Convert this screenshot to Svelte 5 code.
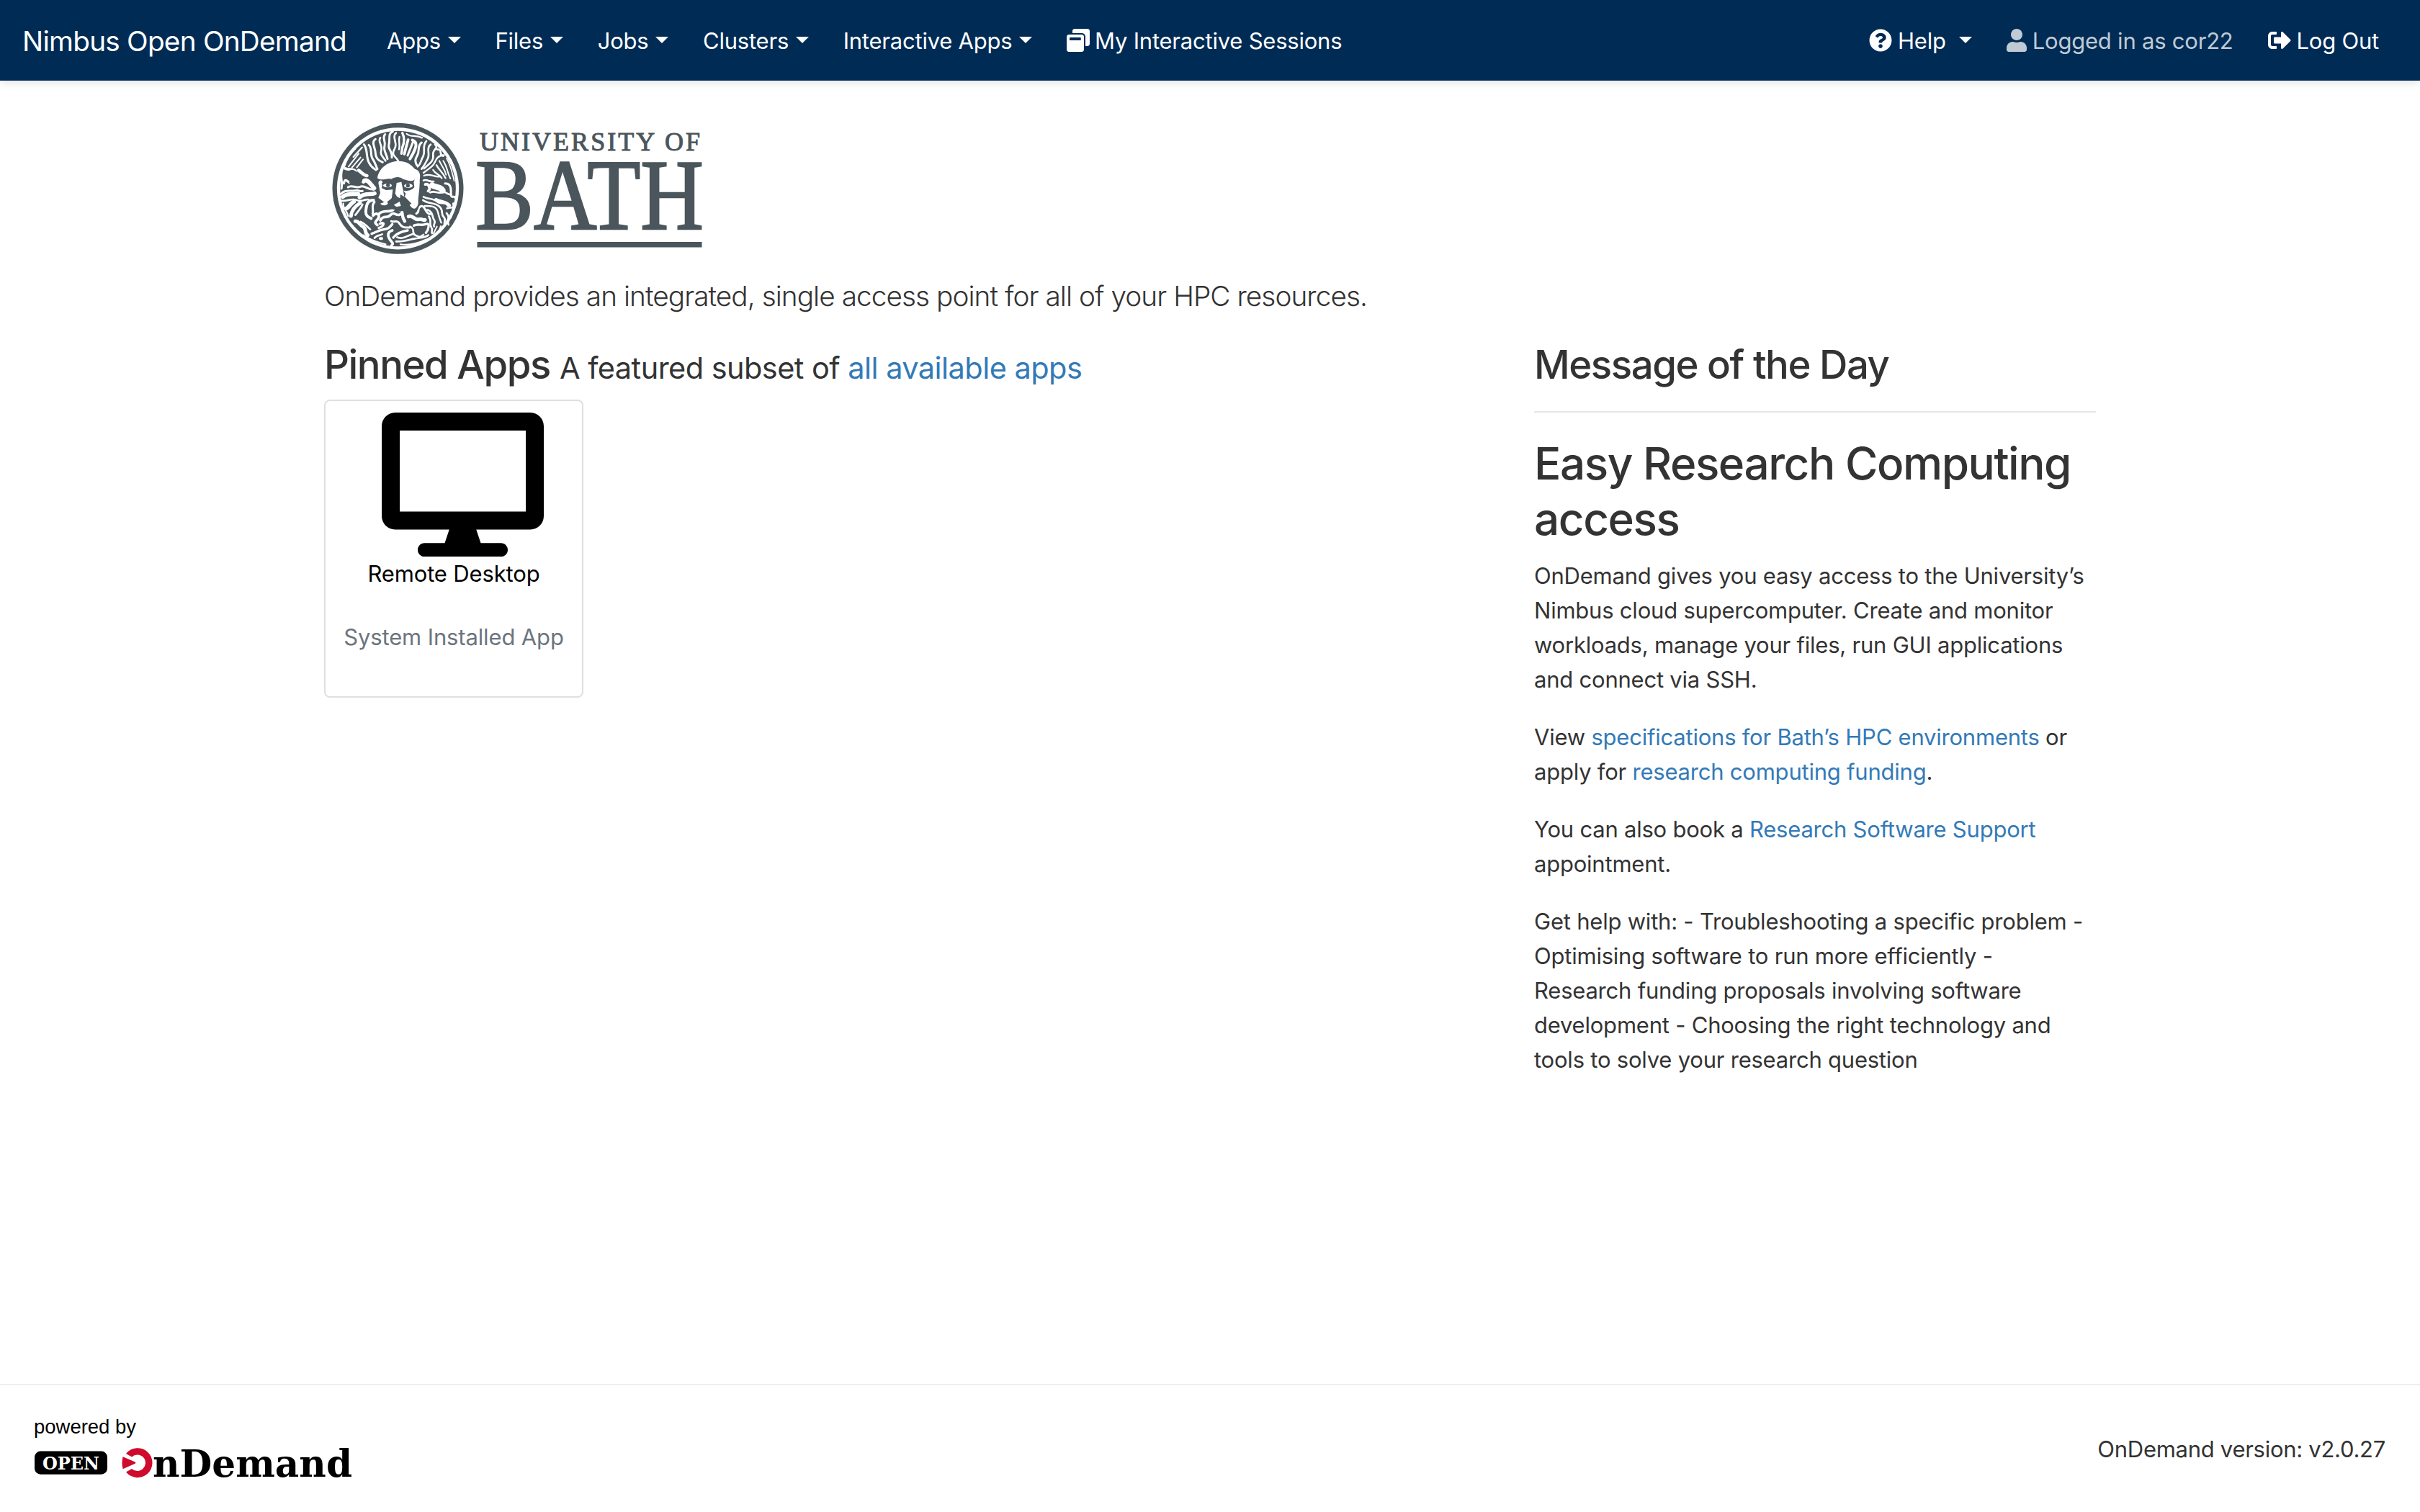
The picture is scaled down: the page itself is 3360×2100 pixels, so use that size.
<script>
  const icons = {
    sessions: {
      w: 512,
      d: 'M512 48v288c0 26.5-21.5 48-48 48h-48V176c0-44.1-35.9-80-80-80H128V48c0-26.5 21.5-48 48-48h288c26.5 0 48 21.5 48 48zM384 176v288c0 26.5-21.5 48-48 48H48c-26.5 0-48-21.5-48-48V176c0-26.5 21.5-48 48-48h288c26.5 0 48 21.5 48 48zm-68 28c0-6.6-5.4-12-12-12H76c-6.6 0-12 5.4-12 12v52h252v-52z'
    },
    help: {
      w: 512,
      d: 'M504 256c0 136.997-111.043 248-248 248S8 392.997 8 256C8 119.083 119.043 8 256 8s248 111.083 248 248zM262.655 90c-54.497 0-89.255 22.957-116.549 63.758-3.536 5.286-2.353 12.415 2.715 16.258l34.699 26.31c5.205 3.947 12.621 3.008 16.665-2.122 17.864-22.658 30.113-35.797 57.303-35.797 20.429 0 45.698 13.148 45.698 32.958 0 14.976-12.363 22.667-32.534 33.976C247.128 238.528 216 254.941 216 296v4c0 6.627 5.373 12 12 12h56c6.627 0 12-5.373 12-12v-1.333c0-28.462 83.186-29.647 83.186-106.667 0-58.002-60.165-102-116.531-102zM256 338c-25.365 0-46 20.635-46 46 0 25.364 20.635 46 46 46s46-20.636 46-46c0-25.365-20.635-46-46-46z'
    },
    user: {
      w: 448,
      d: 'M224 256c70.7 0 128-57.3 128-128S294.7 0 224 0 96 57.3 96 128s57.3 128 128 128zm89.6 32h-16.7c-22.2 10.2-46.9 16-72.9 16s-50.6-5.8-72.9-16h-16.7C60.2 288 0 348.2 0 422.4V464c0 26.5 21.5 48 48 48h352c26.5 0 48-21.5 48-48v-41.6c0-74.2-60.2-134.4-134.4-134.4z'
    },
    logout: {
      w: 512,
      d: 'M497 273L329 441c-15 15-41 4.5-41-17v-96H152c-13.3 0-24-10.7-24-24v-96c0-13.3 10.7-24 24-24h136V88c0-21.4 25.9-32 41-17l168 168c9.3 9.4 9.3 24.6 0 34zM192 436v-40c0-6.6-5.4-12-12-12H96c-17.7 0-32-14.3-32-32V160c0-17.7 14.3-32 32-32h84c6.6 0 12-5.4 12-12V76c0-6.6-5.4-12-12-12H96c-53 0-96 43-96 96v192c0 53 43 96 96 96h84c6.6 0 12-5.4 12-12z'
    }
  };

  const menus = ['Apps', 'Files', 'Jobs', 'Clusters', 'Interactive Apps'];

  // Strands of hair and beard on the crest: [stroke width, path]
  const strands = [
    [9, 'M268 50C246 58 258 84 252 104S268 132 264 158'],
    [8, 'M282 56C268 66 278 84 280 104S262 132 272 148 286 160 292 176'],
    [7, 'M296 72C290 88 300 104 294 124'],
    [9, 'M236 62C222 76 240 92 234 110S240 138 246 164'],
    [8, 'M216 76C204 92 226 106 220 128S228 154 238 172'],
    [9, 'M196 82C176 94 196 118 196 140S210 172 226 178'],
    [9, 'M168 106C184 118 172 146 184 164S196 190 204 206'],
    [9, 'M148 104C164 122 156 154 168 178S186 200 198 210'],
    [7, 'M140 116L104 156'],
    [6, 'M126 142L84 196'],
    [6, 'M134 158L98 200'],
    [6, 'M144 166L118 200'],
    [6, 'M112 122C88 142 74 170 66 198'],
    [10, 'M308 56C318 76 318 92 308 116L304 142'],
    [11, 'M332 84L316 144'],
    [9, 'M352 94L330 150'],
    [12, 'M350 86C374 96 364 118 352 142L340 164'],
    [7, 'M326 60C344 76 362 62 390 76'],
    [9, 'M388 96C368 112 382 130 370 150S362 176 368 190'],
    [8, 'M408 90C388 110 406 132 394 154S386 184 372 196'],
    [8, 'M426 104C406 118 424 142 414 162S404 186 388 206'],
    [8, 'M444 104C462 120 432 124 436 148S424 182 398 204'],
    [8, 'M452 124C480 126 456 146 478 152'],
    [7, 'M482 148C446 150 448 176 436 190S418 204 396 222'],
    [6, 'M462 172C472 196 484 204 490 230'],
    [6, 'M478 172C496 198 494 220 508 246'],
    [5, 'M492 162C510 190 516 224 524 256'],
    [7, 'M450 190C462 212 472 214 488 244'],
    [7, 'M436 210C446 228 460 226 472 244'],
    [7, 'M398 234C424 222 436 240 462 238'],
    [8, 'M396 254C410 246 420 262 438 258'],
    [12, 'M404 270C416 264 428 288 416 298'],
    [24, 'M432 274C446 286 464 276 476 296'],
    [9, 'M486 266C504 266 512 278 510 306S526 314 528 326'],
    [8, 'M424 304C440 294 454 310 474 304S494 316 512 312'],
    [8, 'M396 322C418 334 434 326 452 342S484 338 498 360'],
    [14, 'M448 334C466 344 486 340 504 358'],
    [8, 'M394 336C412 352 442 344 462 362S466 394 480 406 476 430 486 440'],
    [7, 'M402 360C428 360 450 360 456 386S464 414 470 430'],
    [8, 'M494 370C512 364 524 374 520 350'],
    [8, 'M492 390C510 408 492 422 500 438'],
    [6, 'M522 378L508 412'],
    [12, 'M70 204C84 212 98 202 112 214'],
    [9, 'M54 222C50 246 60 262 54 288'],
    [14, 'M126 212C142 224 148 232 160 234'],
    [18, 'M146 258C162 242 176 272 190 286'],
    [10, 'M64 266C68 244 78 256 86 262'],
    [9, 'M82 282C98 270 112 288 132 280S160 292 188 292'],
    [9, 'M52 310C70 290 88 300 110 296S128 302 142 298'],
    [17, 'M60 322C76 306 98 312 124 310'],
    [17, 'M130 324C150 304 174 314 192 308'],
    [8, 'M54 338C78 342 98 326 118 336S152 330 168 334'],
    [17, 'M76 370C88 362 94 348 106 342'],
    [15, 'M94 402C96 376 116 358 132 348'],
    [8, 'M112 398C124 382 138 366 142 354'],
    [7, 'M62 350C58 368 78 380 82 402'],
    [12, 'M188 336C160 336 158 360 156 380S164 406 178 412'],
    [9, 'M192 344C176 360 190 374 184 392'],
    [15, 'M112 424C126 422 128 438 144 446S148 472 164 482'],
    [8, 'M134 426C150 432 162 446 174 458'],
    [8, 'M98 440C108 454 120 462 128 478'],
    [11, 'M186 400C202 384 218 400 206 414S190 428 204 440'],
    [11, 'M212 392C230 374 248 390 270 376'],
    [11, 'M216 420C232 394 242 416 258 398S280 404 298 396'],
    [10, 'M214 434C238 424 232 444 210 452'],
    [9, 'M262 424C280 430 284 416 296 434S318 450 338 450'],
    [10, 'M180 476C202 468 208 462 230 458S252 452 266 436'],
    [8, 'M192 494C204 478 214 486 224 478'],
    [13, 'M296 374C316 386 300 400 318 424'],
    [15, 'M334 404C352 396 358 420 376 416S398 424 402 418'],
    [9, 'M366 392C384 380 366 372 384 362S404 396 424 394'],
    [8, 'M412 376C438 386 430 404 440 418S434 438 440 446'],
    [8, 'M418 404C432 422 418 434 428 448S426 466 432 474'],
    [10, 'M356 442C374 432 388 444 406 436S418 458 406 472'],
    [8, 'M340 446C364 456 344 474 362 482S382 492 396 480'],
    [11, 'M266 462C240 470 248 492 262 508S260 520 262 528'],
    [10, 'M270 492C284 472 308 466 330 462'],
    [8, 'M286 490C308 502 332 482 354 476'],
    [8, 'M282 508C316 510 338 500 360 496S400 494 416 482'],
    [7, 'M300 520C338 526 374 516 408 500'],
    [6, 'M452 446L438 474'],
    [6, 'M468 444L458 470'],
    [7, 'M146 482C176 502 204 512 238 520'],
    [12, 'M216 496L222 496']
  ];
</script>

{#snippet icon(i)}
  <svg class="icon" class:narrow={i.w === 448} viewBox="0 0 {i.w} 512" aria-hidden="true"><path d={i.d} /></svg>
{/snippet}

<div class="page">
  <nav class="navbar">
    <a class="brand" href="#home">Nimbus Open OnDemand</a>
    <div class="menu">
      {#each menus as m}
        <a class="item" href="#menu">{m}<span class="caret"></span></a>
      {/each}
      <a class="item sessions" href="#sessions">{@render icon(icons.sessions)}<span>My Interactive Sessions</span></a>
    </div>
    <div class="menu account">
      <a class="item help" href="#help">{@render icon(icons.help)}<span>Help</span><span class="caret"></span></a>
      <span class="item muted">{@render icon(icons.user)}<span>Logged in as cor22</span></span>
      <a class="item" href="#logout">{@render icon(icons.logout)}<span>Log Out</span></a>
    </div>
  </nav>

  <main>
    <svg class="logo" viewBox="0 0 540 192" role="img" aria-label="University of Bath">
      <g transform="translate(6 0) scale(.33333)">
        <circle class="ring" cx="289.5" cy="287.5" r="263.5" />
        <circle class="ink" cx="289.5" cy="288" r="241" />
        <g class="strands">
          {#each strands as [w, d]}
            <path stroke-width={w} {d} />
          {/each}
        </g>
        <path class="ink" d="M200 232C206 300 196 330 214 360C250 376 280 372 300 384C330 372 350 396 372 376C392 330 386 260 384 210L300 190Z" />
        <g class="white">
          <path d="M204 240C212 205 240 178 285 173C330 172 345 190 360 206C378 210 386 228 380 250L354 254C336 260 325 250 310 248C300 238 280 236 262 248C245 242 228 256 205 246Z" />
          <path d="M354 250L380 246C382 290 372 325 374 350C366 378 352 376 338 356L346 350L318 322L322 308L312 296C325 298 345 298 358 282Z" />
          <path d="M284 264L304 260L312 300L316 322L300 312L298 328L286 322L278 308Z" />
          <path d="M208 264C210 250 226 250 226 264L222 286L240 294L268 292L264 326C254 340 240 338 248 350C238 362 220 358 216 350L232 344L208 326L216 306Z" />
          <ellipse cx="246" cy="275" rx="18" ry="8" />
          <ellipse cx="333" cy="276" rx="18" ry="9" />
          <path d="M272 356L296 342L302 360L284 364Z" />
        </g>
        <g class="ink">
          <circle cx="248" cy="274" r="8" />
          <circle cx="331" cy="275" r="8" />
          <path d="M308 262C330 254 340 264 360 250L352 266C336 262 326 266 314 272Z" />
          <path d="M222 264C240 256 258 262 280 252L276 270C258 262 240 264 224 272Z" />
          <path d="M84 214C104 204 116 214 118 226C136 228 148 242 138 262L122 258L118 276L104 262L86 264L92 246Z" />
        </g>
      </g>
      <g class="words">
        <text class="small" x="216" y="43.3" textLength="306" lengthAdjust="spacing">UNIVERSITY OF</text>
        <text class="big" x="210" y="151.5" textLength="317" lengthAdjust="spacingAndGlyphs">BATH</text>
      </g>
      <rect class="ink" x="212.5" y="170" width="312" height="7.5" />
    </svg>

    <p class="lead">OnDemand provides an integrated, single access point for all of your HPC resources.</p>

    <div class="columns">
      <section>
        <h2>Pinned Apps <small>A featured subset of <a href="#apps">all available apps</a></small></h2>
        <a class="card" href="#desktop">
          <svg class="monitor" viewBox="0 0 576 512" aria-hidden="true"><path d="M528 0H48C21.5 0 0 21.5 0 48v320c0 26.5 21.5 48 48 48h192l-16 48h-72c-13.3 0-24 10.7-24 24s10.7 24 24 24h272c13.3 0 24-10.7 24-24s-10.7-24-24-24h-72l-16-48h192c26.5 0 48-21.5 48-48V48c0-26.5-21.5-48-48-48zm-16 352H64V64h448v288z" /></svg>
          <span class="title">Remote Desktop</span>
          <span class="kind">System Installed App</span>
        </a>
      </section>

      <aside>
        <h2>Message of the Day</h2>
        <hr />
        <h1>Easy Research Computing<br />access</h1>
        <p>OnDemand gives you easy access to the University’s<br />Nimbus cloud supercomputer. Create and monitor<br />workloads, manage your files, run GUI applications<br />and connect via SSH.</p>
        <p>View <a href="#spec">specifications for Bath’s HPC environments</a> or<br />apply for <a href="#funding">research computing funding</a>.</p>
        <p>You can also book a <a href="#support">Research Software Support</a><br />appointment.</p>
        <p>Get help with: - Troubleshooting a specific problem -<br />Optimising software to run more efficiently -<br />Research funding proposals involving software<br />development - Choosing the right technology and<br />tools to solve your research question</p>
      </aside>
    </div>
  </main>

  <footer>
    <svg class="powered" viewBox="0 0 444 90" role="img" aria-label="powered by Open OnDemand">
      <text class="by" x="-1" y="21.3" textLength="142" lengthAdjust="spacingAndGlyphs">powered by</text>
      <rect x="0" y="45.5" width="101" height="32.3" rx="8.5" />
      <text class="open" x="11" y="70.7" textLength="79" lengthAdjust="spacingAndGlyphs">OPEN</text>
      <path class="red" d="M127 48.9A20.5 20.5 0 1 1 127 74.5L135 70A11.3 11.3 0 1 0 135 53.4Z" />
      <path class="red" d="M122.6 53.3L139.6 60.6Q141 61.7 139.6 62.8L122.6 70.2Q120.4 61.7 122.6 53.3Z" />
      <text class="demand" x="164" y="81" textLength="277" lengthAdjust="spacingAndGlyphs">nDemand</text>
    </svg>
    <span class="version">OnDemand version: v2.0.27</span>
  </footer>
</div>

<style>
  :global(body) {
    background: #fff;
  }
  .page {
    height: 2100px;
    display: flex;
    flex-direction: column;
    box-sizing: border-box;
    overflow: hidden;
    color: #333;
    font: 400 31px/48px Inter, 'Liberation Sans', sans-serif;
    letter-spacing: -0.22px;
  }
  a {
    color: #337ab7;
    text-decoration: none;
  }
  h1,
  h2,
  p {
    margin: 0;
  }
  .navbar {
    height: 112px;
    flex: none;
    box-sizing: border-box;
    padding: 1px 57px 0 31px;
    display: flex;
    align-items: center;
    background: #002b55;
    box-shadow: 0 2px 12px rgba(0, 0, 0, 0.13);
    white-space: nowrap;
  }
  .brand {
    width: 506px;
    font-size: 38.75px;
    letter-spacing: -0.78px;
    color: #fff;
  }
  .menu {
    display: flex;
    align-items: center;
    gap: 47.6px;
  }
  .account {
    margin-left: auto;
    gap: 48px;
  }
  .item {
    display: flex;
    align-items: center;
    color: #fff;
  }
  .muted {
    color: #bfcad5;
  }
  .caret {
    margin: -3px 0 0 10px;
    border: 9.6px solid transparent;
    border-top-color: #fff;
    border-bottom: 0;
  }
  .help .caret {
    margin-left: 18px;
  }
  .icon {
    width: 32px;
    height: 32px;
    margin-right: 7px;
    margin-top: -1px;
    fill: currentColor;
  }
  .account .icon {
    margin-right: 8px;
  }
  .icon.narrow {
    width: 28px;
  }
  main {
    flex: 1;
    width: 2460px;
    margin: 0 auto;
    padding-top: 54px;
  }
  .logo {
    display: block;
    width: 540px;
    height: 192px;
    overflow: visible;
  }
  .ring {
    fill: none;
    stroke: #4b565c;
    stroke-width: 19;
  }
  .ink {
    fill: #4b565c;
  }
  .strands {
    fill: none;
    stroke: #fff;
    stroke-linecap: round;
  }
  .white {
    fill: #fff;
  }
  .words {
    fill: #4b565c;
    stroke: #4b565c;
    font-family: 'Liberation Serif', serif;
    letter-spacing: 0;
  }
  .small {
    font-size: 36px;
    stroke-width: 1;
  }
  .big {
    font-size: 139px;
    stroke-width: 2.4;
  }
  .lead {
    margin: 23px 0 32px;
    font-size: 38.75px;
    font-weight: 300;
    line-height: 60px;
    letter-spacing: -0.94px;
  }
  .columns {
    display: grid;
    grid-template-columns: 1620px 780px;
    gap: 60px;
    white-space: nowrap;
  }
  h2 {
    font-size: 54.5px;
    font-weight: 500;
    line-height: 67px;
    letter-spacing: -1.45px;
  }
  h2 small {
    font-size: 41.5px;
    font-weight: 400;
    line-height: 1;
    letter-spacing: -0.55px;
  }
  .card {
    width: 360px;
    height: 414px;
    box-sizing: border-box;
    margin-top: 15px;
    padding-top: 16px;
    display: flex;
    flex-direction: column;
    align-items: center;
    border: 2px solid #dfdfdf;
    border-radius: 8px;
    color: #000;
    letter-spacing: -0.14px;
  }
  .monitor {
    width: 225px;
    height: 200px;
    margin-left: 24px;
  }
  .kind {
    margin-top: 40px;
    color: #6c757d;
  }
  hr {
    margin: 31px 0 33px;
    border: 0;
    height: 2px;
    background: #e5e5e5;
  }
  h1 {
    margin-bottom: 16px;
    font-size: 62px;
    font-weight: 500;
    line-height: 76.8px;
    letter-spacing: -1.43px;
  }
  aside p {
    margin-bottom: 32px;
  }
  footer {
    flex: none;
    height: 178px;
    box-sizing: border-box;
    padding: 0 48px 0 48px;
    border-top: 2px solid #eee;
    display: flex;
    align-items: center;
    justify-content: space-between;
  }
  .powered {
    width: 444px;
    height: 90px;
    margin-top: 6px;
    overflow: visible;
    letter-spacing: 0;
  }
  .by {
    font: 400 27px 'Liberation Sans', sans-serif;
  }
  .open {
    font: 700 24px 'DejaVu Serif', serif;
    fill: #fff;
  }
  .demand {
    font: 700 52px 'DejaVu Serif', serif;
  }
  .red {
    fill: #cf0a2c;
  }
  .version {
    margin-top: 2px;
    letter-spacing: -0.28px;
  }
</style>
